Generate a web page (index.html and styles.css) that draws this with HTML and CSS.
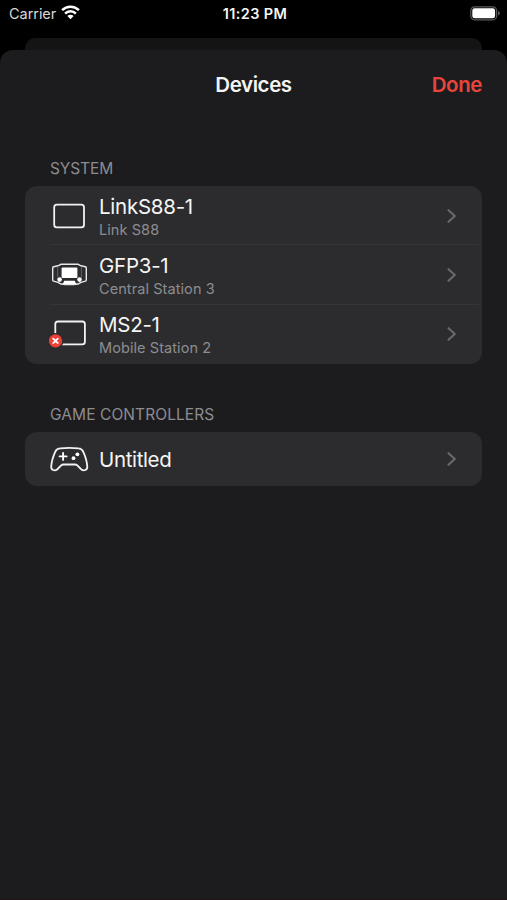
FILE: index.html
```html
<!DOCTYPE html>
<html lang="en">
<head>
<meta charset="utf-8">
<title>Devices</title>
<link rel="stylesheet" href="styles.css">
</head>
<body>
<div class="status">
  <div class="carrier"><span>Carrier</span>
    <svg width="19" height="15" viewBox="0 0 19 15"><g fill="none" stroke="#fff" stroke-width="2.5"><path d="M1.1 5.1a12 12 0 0 1 16.8 0"/><path d="M4.1 8.6a7.6 7.6 0 0 1 10.8 0"/></g><path d="M9.5 14.2 6.4 11a4.4 4.4 0 0 1 6.2 0z" fill="#fff"/></svg>
  </div>
  <div class="time">11:23 PM</div>
  <svg class="battery" width="31" height="15" viewBox="0 0 31 15"><rect x=".8" y=".8" width="25.8" height="13" rx="3.8" fill="none" stroke="#5b5b5d" stroke-width="1.2"/><rect x="2.3" y="2.3" width="22.8" height="10" rx="2.4" fill="#fff"/><path d="M28 5v4.6q1.8-.6 1.8-2.3T28 5z" fill="#5b5b5d"/></svg>
</div>
<div class="backsheet"></div>
<main class="sheet">
  <header class="nav"><h1>Devices</h1><span class="done">Done</span></header>
  <h2 class="label system">SYSTEM</h2>
  <section class="list">
    <div class="row">
      <svg class="icon" viewBox="0 0 40 32"><rect x="5.2" y="4.6" width="29.8" height="22.8" rx="2.6" fill="none" stroke="#f2f2f2" stroke-width="1.8"/></svg>
      <div class="text"><div class="name n1">LinkS88-1</div><div class="sub">Link S88</div></div>
      <svg class="chevron" viewBox="0 0 10 16"><path d="M1.5 2.2 7.8 8l-6.3 5.8"/></svg>
    </div>
    <div class="row">
      <svg class="icon" viewBox="0 0 40 32"><path d="M12 5.300h17l3 1.500 4.400 1q.9.200.9 1.100v12.100q0 .9-.9 1.200L32 23.400l-3 1.600q-8.500 1-17 0l-3-1.600-4.400-1.200q-.9-.3-.9-1.200V8.900q0-.9.9-1.100l4.400-1z" fill="none" stroke="#e8e8e8" stroke-width="1.400"/><path d="M8.600 7.400v11M32.400 7.400v11" stroke="#77777a" stroke-width=".7"/><rect x="12.600" y="8.400" width="15.800" height="10.600" rx="1" fill="#fff"/><circle cx="10.600" cy="20.600" r="2.300" fill="#fff"/><circle cx="30.500" cy="20.600" r="2.300" fill="#fff"/><path d="M15.200 21.800h10.600l1.400 3.200H13.800z" fill="#fff"/></svg>
      <div class="text"><div class="name n2">GFP3-1</div><div class="sub">Central Station 3</div></div>
      <svg class="chevron" viewBox="0 0 10 16"><path d="M1.5 2.2 7.8 8l-6.3 5.8"/></svg>
    </div>
    <div class="row">
      <svg class="icon" viewBox="0 0 40 32"><rect x="6.300" y="3.500" width="29.600" height="22.800" rx="2.600" fill="none" stroke="#f2f2f2" stroke-width="1.800"/><circle cx="6.500" cy="22.900" r="8" fill="#2c2c2e"/><circle cx="6.500" cy="22.900" r="6.600" fill="#eb4138"/><path d="m4.200 20.600 4.600 4.600m0-4.600-4.600 4.600" stroke="#fff" stroke-width="1.700" stroke-linecap="round"/></svg>
      <div class="text"><div class="name n3">MS2-1</div><div class="sub">Mobile Station 2</div></div>
      <svg class="chevron" viewBox="0 0 10 16"><path d="M1.5 2.2 7.8 8l-6.3 5.8"/></svg>
    </div>
  </section>
  <h2 class="label games">GAME CONTROLLERS</h2>
  <section class="list">
    <div class="row single">
      <svg class="icon" viewBox="0 0 40 32"><path d="M11 5.400Q20.200 4.500 29.500 5.400C32.200 5.600 33.300 6.600 34.300 8.800C36.400 13.500 38 18.600 38.300 23.500C38.500 27 34.900 28.400 32.400 26.500L28.300 22.400Q27.400 21.500 26 21.500H14.500Q13.100 21.500 12.200 22.400L8.100 26.500C5.600 28.400 2 27 2.200 23.500C2.500 18.600 4.100 13.500 6.200 8.800C7.200 6.600 8.300 5.600 11 5.400Z" fill="none" stroke="#f2f2f2" stroke-width="1.800"/><path d="M10.600 13.400h7M14.100 9.900v7" stroke="#fff" stroke-width="1.900" stroke-linecap="round"/><circle cx="28.400" cy="11.300" r="1.900" fill="#fff"/><circle cx="24.500" cy="15.200" r="1.900" fill="#fff"/></svg>
      <div class="text"><div class="name n4">Untitled</div></div>
      <svg class="chevron" viewBox="0 0 10 16"><path d="M1.5 2.2 7.8 8l-6.3 5.8"/></svg>
    </div>
  </section>
</main>
</body>
</html>
```
FILE: styles.css
```css
* { box-sizing: border-box; }
body { margin: 0; height: 900px; background: #000; color: #f5f5f5; font-family: Inter, "Liberation Sans", sans-serif; overflow: hidden; display: flex; flex-direction: column; }
svg { display: block; flex: none; }
.status { height: 38px; flex: none; padding: 5px 6px 0 9px; display: grid; grid-template-columns: 1fr auto 1fr; align-items: start; font-size: 14.5px; line-height: 18px; }
.carrier { display: flex; gap: 5px; color: #d8d8d8; letter-spacing: -0.05px; }
.time { font-weight: 600; letter-spacing: 0.4px; }
.battery { justify-self: end; margin-top: 1px; }
.backsheet { height: 12px; flex: none; margin: 0 25px; border-radius: 10px 10px 0 0; background: #141414; }
.sheet { flex: 1; background: #1c1c1e; border-radius: 13px 13px 0 0; padding: 0 25px; border-bottom: 1px solid #21151a; }
.nav { height: 70px; display: grid; grid-template-columns: 1fr auto 1fr; align-items: center; font-size: 20.5px; font-weight: 600; line-height: 26px; letter-spacing: -0.4px; }
h1 { grid-column: 2; margin: 0; font: inherit; }
.done { justify-self: end; color: #e8453c; }
.label { margin: 0; padding-left: 25px; font-size: 15.5px; line-height: 20px; font-weight: 400; color: #8c8c91; }
.system { margin-top: 39px; margin-bottom: 7px; letter-spacing: -0.1px; }
.games { margin-top: 41px; margin-bottom: 7px; letter-spacing: 0.08px; }
.list { background: #2c2c2e; border-radius: 12px; overflow: hidden; }
.row { height: 59.4px; display: flex; align-items: center; gap: 10px; padding: 0 25px 0 24px; background: linear-gradient(#353538, #353538) 25px 100% / 429px 1px no-repeat; }
.row:last-child { background: none; }
.single { height: 53.5px; }
.icon { width: 40px; height: 32px; }
.text { flex: 1; padding-top: 1px; }
.name { font-size: 20.5px; line-height: 25px; letter-spacing: -0.25px; }
.n4 { letter-spacing: -0.35px; }
.sub { font-size: 14.5px; line-height: 18px; margin-top: 2px; color: #8c8c91; letter-spacing: 0.08px; }
.chevron { width: 10px; height: 16px; fill: none; stroke: #69696d; stroke-width: 2.1; stroke-linecap: round; stroke-linejoin: round; }
```
